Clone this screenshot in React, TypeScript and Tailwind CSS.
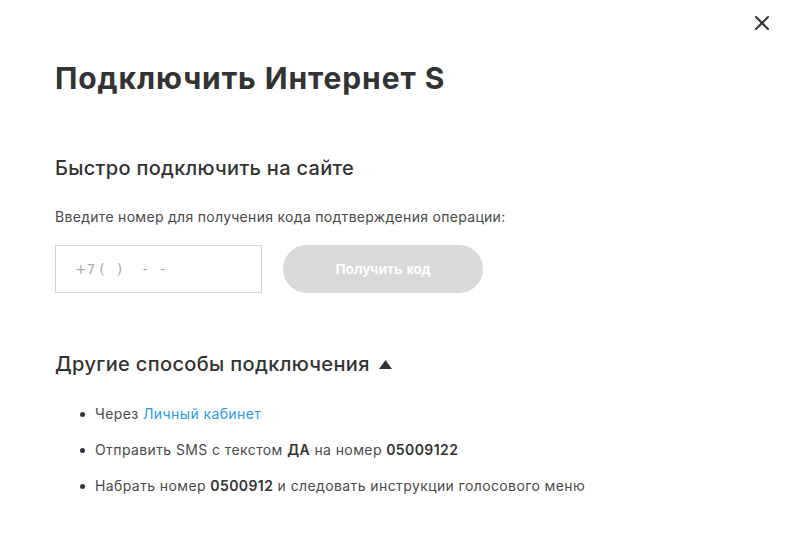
import { X } from "lucide-react";

export default function App() {
  return (
    <div className="relative w-[788px] h-[553px] bg-white text-[#333] font-['Inter',sans-serif]">
      {/* Close */}
      <button className="absolute top-[9px] right-[12px] p-0.5 text-[#333]">
        <X size={24} strokeWidth={2} />
      </button>

      <div className="pl-[55px] pt-[58px]">
        <h1 className="text-[30px] leading-[40px] font-bold text-[#333] tracking-[0.9px]">
          Подключить Интернет S
        </h1>

        <h2 className="mt-[56px] text-[20px] leading-[28px] font-medium text-[#333] tracking-[0.3px]">
          Быстро подключить на сайте
        </h2>
        <p className="mt-[25px] text-[14px] leading-[20px] text-[#4a4a4a] tracking-[0.3px]">
          Введите номер для получения кода подтверждения операции:
        </p>

        <div className="mt-[18px] flex items-center gap-[21px]">
          <div className="w-[207px] h-[48px] border border-[#d6d6d6] flex items-center pl-[19px] text-[14px] text-[#aaa] font-['DejaVu_Sans',sans-serif] tracking-[-0.3px] whitespace-pre">
            +7 (   )     -   -
          </div>
          <button className="w-[200px] h-[48px] rounded-full bg-[#d9d9d9] text-white text-[14px] font-bold font-['Liberation_Sans',sans-serif]">
            Получить код
          </button>
        </div>

        <div className="mt-[57px] flex items-center gap-[9px]">
          <h2 className="text-[20px] leading-[28px] font-medium text-[#333] tracking-[0.35px]">Другие способы подключения</h2>
          <svg width="13" height="9" viewBox="0 0 13 9" className="mt-[1px]">
            <polygon points="6.5,0 13,9 0,9" fill="#333" />
          </svg>
        </div>

        <ul className="mt-[26px] pl-[25px] space-y-[16px] text-[14px] leading-[20px] text-[#4a4a4a] tracking-[0.4px]">
          <li className="flex items-center gap-[10px]">
            <span className="w-[5px] h-[5px] rounded-full bg-[#333]" />
            <span>
              Через <a href="#" className="text-[#2a9bea]">Личный кабинет</a>
            </span>
          </li>
          <li className="flex items-center gap-[10px]">
            <span className="w-[5px] h-[5px] rounded-full bg-[#333]" />
            <span>
              Отправить SMS с текстом <b className="font-semibold text-[#333]">ДА</b> на номер{" "}
              <b className="font-semibold text-[#333]">05009122</b>
            </span>
          </li>
          <li className="flex items-center gap-[10px]">
            <span className="w-[5px] h-[5px] rounded-full bg-[#333]" />
            <span>
              Набрать номер <b className="font-semibold text-[#333]">0500912</b> и следовать инструкции голосового меню
            </span>
          </li>
        </ul>
      </div>
    </div>
  );
}
